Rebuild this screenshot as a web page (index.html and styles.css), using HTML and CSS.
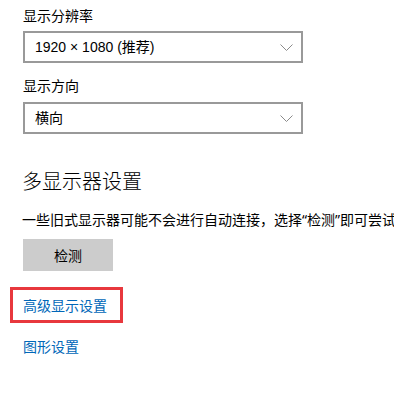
FILE: index.html
```html
<!DOCTYPE html>
<html lang="zh-CN">
<head>
<meta charset="utf-8">
<link rel="stylesheet" href="styles.css">
</head>
<body>
<div class="page">
  <div class="label label-first">显示分辨率</div>
  <div class="select">
    <span class="select-text">1920 × 1080 (推荐)</span>
    <svg class="chevron" width="13" height="7" viewBox="0 0 13 7"><polyline points="0.5,0.5 6.5,6.5 12.5,0.5" fill="none" stroke="#8a8a8a" stroke-width="1"/></svg>
  </div>
  <div class="label label-second">显示方向</div>
  <div class="select">
    <span class="select-text">横向</span>
    <svg class="chevron" width="13" height="7" viewBox="0 0 13 7"><polyline points="0.5,0.5 6.5,6.5 12.5,0.5" fill="none" stroke="#8a8a8a" stroke-width="1"/></svg>
  </div>
  <h2 class="heading">多显示器设置</h2>
  <div class="desc-wrap"><p class="desc">一些旧式显示器可能不会进行自动连接，选择“检测”即可尝试连接它们。</p></div>
  <div class="button">检测</div>
  <div class="highlight"><a class="link">高级显示设置</a></div>
  <div class="link-row"><a class="link">图形设置</a></div>
</div>
</body>
</html>
```
FILE: styles.css
```css
html, body {
  margin: 0;
  padding: 0;
  background: #ffffff;
}
body {
  width: 394px;
  height: 400px;
  overflow: hidden;
  font-family: "Noto Sans CJK SC", "Noto Sans", sans-serif;
  color: #000;
}
.page {
  padding: 5px 0 0 23px;
}
.label {
  font-size: 14px;
  line-height: 20px;
  margin-bottom: 6px;
}
.label-second {
  margin-top: 12px;
  margin-bottom: 7px;
}
.select {
  box-sizing: border-box;
  width: 280px;
  height: 32px;
  border: 2px solid #999999;
  display: flex;
  align-items: center;
  justify-content: space-between;
  padding: 0 8px 0 10px;
}
.select-text {
  font-family: "Liberation Sans", "Noto Sans CJK SC", sans-serif;
  font-size: 14px;
  line-height: 20px;
}
.chevron {
  display: block;
  margin-top: 1px;
}
.heading {
  margin: 33px 0 0 -1px;
  font-size: 20px;
  line-height: 28px;
  font-weight: 300;
}
.desc-wrap {
  margin: 15px 0 0 -1px;
  width: 372px;
  overflow: hidden;
}
.desc {
  margin: 0;
  font-family: "Noto Sans", "Noto Sans CJK SC", sans-serif;
  font-size: 14px;
  line-height: 20px;
  white-space: nowrap;
}
.button {
  margin-top: 9px;
  width: 90px;
  height: 32px;
  background: #cccccc;
  font-size: 14px;
  line-height: 32px;
  text-align: center;
}
.highlight {
  margin: 16px 0 0 -13px;
  width: 113px;
  box-sizing: border-box;
  border: 3px solid #e8383d;
  padding: 5px 0 5px 10px;
}
.link {
  display: block;
  font-size: 14px;
  line-height: 20px;
  color: #0067b8;
}
.link-row {
  margin-top: 13px;
}
```
